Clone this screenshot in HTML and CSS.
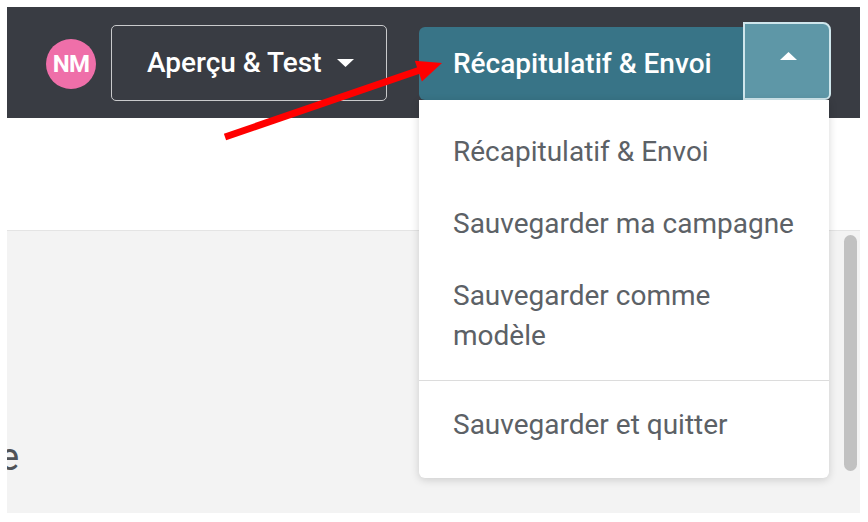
FILE: index.html
```html
<!DOCTYPE html>
<html lang="fr">
<head>
<meta charset="utf-8">
<title>Campagne</title>
<link rel="stylesheet" href="styles.css">
</head>
<body>
<div class="app">
  <header class="topbar">
    <div class="avatar">NM</div>
    <button class="btn-outline">Aperçu &amp; Test
      <svg class="caret" width="17" height="8" viewBox="0 0 17 8"><path d="M0 0H17L8.5 8Z" fill="#fff"/></svg>
    </button>
    <div class="split">
      <button class="btn-main">Récapitulatif &amp; Envoi</button>
      <button class="btn-toggle">
        <svg width="17" height="8" viewBox="0 0 17 8"><path d="M0 8H17L8.5 0Z" fill="#fff"/></svg>
      </button>
      <div class="menu">
        <div class="menu-item">Récapitulatif &amp; Envoi</div>
        <div class="menu-item">Sauvegarder ma campagne</div>
        <div class="menu-item">Sauvegarder comme<br>modèle</div>
        <div class="menu-divider"></div>
        <div class="menu-item">Sauvegarder et quitter</div>
      </div>
    </div>
  </header>
  <section class="subbar"></section>
  <main class="content">
    <div class="content-body">
      <p class="cut-text">e</p>
    </div>
    <div class="scroll-thumb"></div>
  </main>
  <svg class="annotation" width="868" height="522" viewBox="0 0 868 522">
    <line x1="225" y1="137" x2="420" y2="70" stroke="#ff0000" stroke-width="7"/>
    <path d="M442 63L414.8 60.7L421.9 81.5Z" fill="#ff0000"/>
  </svg>
</div>
</body>
</html>
```

FILE: styles.css
```css
* { box-sizing: border-box; }
html, body { margin: 0; padding: 0; background: #ffffff; }
body { font-family: Roboto, "Liberation Sans", sans-serif; }

.app {
  margin: 7px 8px 9px 7px;
  width: 853px;
  height: 506px;
  display: flex;
  flex-direction: column;
  overflow: hidden;
}

.topbar {
  position: relative;
  z-index: 2;
  height: 111px;
  flex: none;
  background: #393c43;
  display: flex;
  align-items: center;
  padding-left: 39px;
}

.avatar {
  width: 50px;
  height: 50px;
  border-radius: 50%;
  background: #ef6fa9;
  color: #fff;
  font-weight: 700;
  font-size: 24px;
  letter-spacing: -0.8px;
  display: flex;
  align-items: center;
  justify-content: center;
  margin-top: 2px;
}

.btn-outline {
  margin-left: 15px;
  width: 276px;
  height: 76px;
  border: 1.5px solid #c9cacc;
  border-radius: 5px;
  background: transparent;
  color: #fff;
  font-family: inherit;
  font-weight: 500;
  font-size: 28px;
  display: flex;
  align-items: center;
  padding: 0 0 0 35px;
  gap: 15px;
}

.split {
  position: relative;
  margin-left: 32px;
  margin-bottom: 3px;
  display: flex;
  align-items: flex-end;
}

.btn-main {
  width: 324px;
  height: 73px;
  background: #387487;
  border: none;
  border-radius: 6px 0 0 6px;
  color: #fff;
  font-family: inherit;
  font-weight: 500;
  font-size: 28px;
  padding: 0 0 0 34px;
  text-align: left;
}

.btn-toggle {
  width: 88px;
  height: 78px;
  background: #5e97a7;
  border: 2px solid #cfe6ec;
  border-radius: 0 8px 6px 0;
  display: flex;
  align-items: center;
  justify-content: center;
  padding: 0 0 10px 2px;
}

.menu {
  position: absolute;
  top: 100%;
  left: 0;
  width: 410px;
  background: #fff;
  border-radius: 0 0 6px 6px;
  box-shadow: 0 2px 8px rgba(0, 0, 0, 0.16);
  padding: 16px 0 17px;
}

.menu-item {
  padding: 16px 34px;
  font-size: 28px;
  line-height: 40px;
  color: #5c6166;
}

.menu-divider {
  height: 1px;
  margin: 8px 0;
  background: #dcdcdc;
}

.subbar {
  flex: none;
  height: 113px;
  background: #fff;
  border-bottom: 1px solid #e4e4e4;
}

.content {
  flex: none;
  height: 282px;
  background: #f3f3f3;
  display: flex;
}

.content-body {
  flex: 1;
  padding-top: 206px;
}

.cut-text {
  margin: 0 0 0 -8px;
  font-size: 38px;
  line-height: 40px;
  color: #4f5257;
}

.scroll-thumb {
  width: 13px;
  height: 236px;
  margin: 4px 3px 0 0;
  background: #c1c1c1;
  border-radius: 7px;
}

.annotation {
  position: absolute;
  left: 0;
  top: 0;
  z-index: 5;
  pointer-events: none;
}
```
